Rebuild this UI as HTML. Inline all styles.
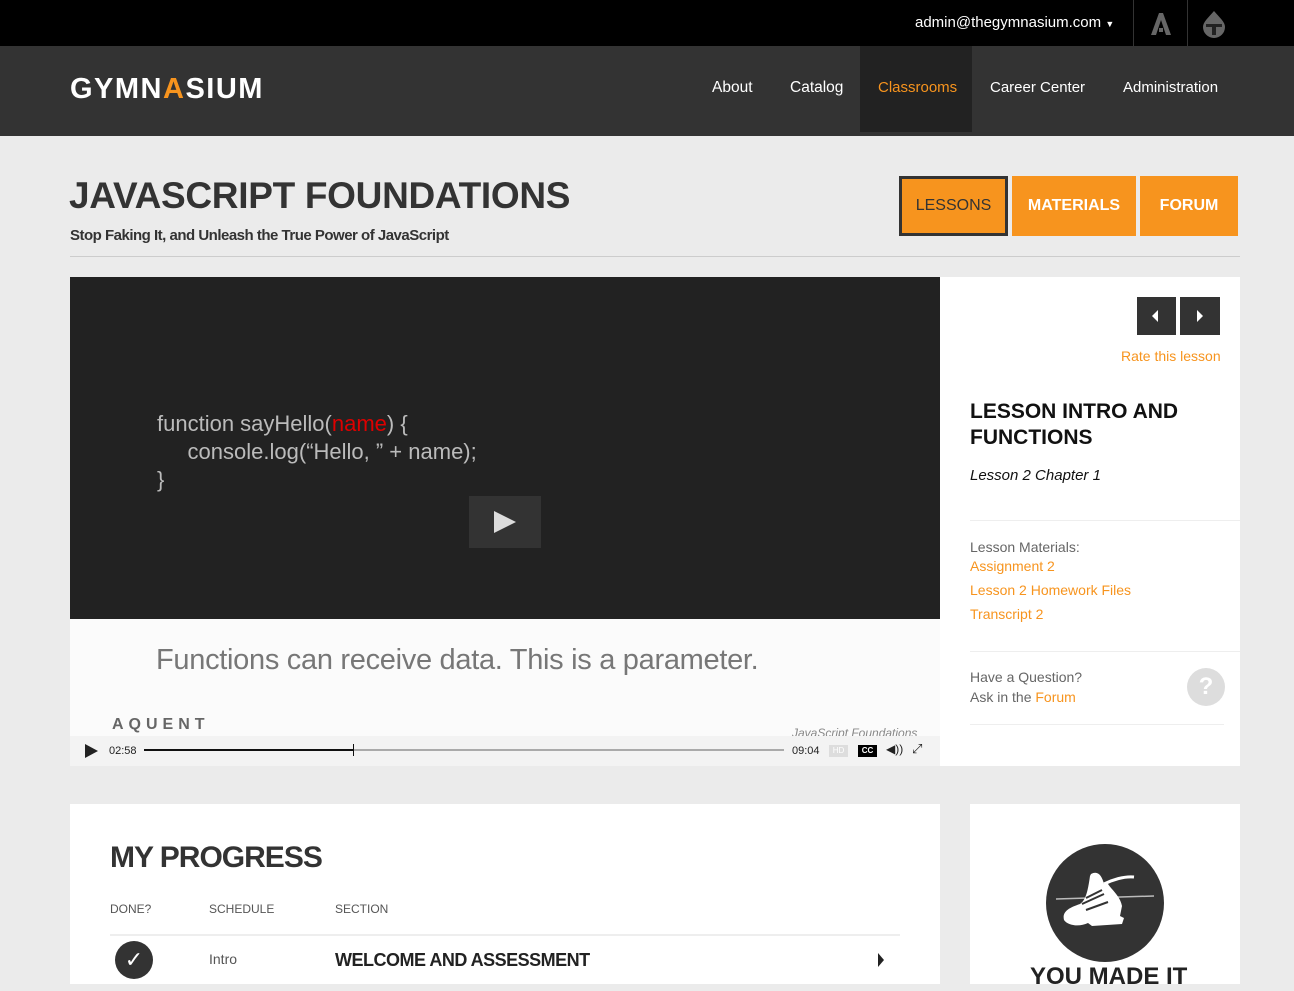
<!DOCTYPE html>
<html><head><meta charset="utf-8"><style>
*{margin:0;padding:0;box-sizing:border-box}
body{width:1294px;height:977px;overflow:hidden;background:#ebebeb;font-family:"Liberation Sans",sans-serif;position:relative}
.a{position:absolute}
.top{left:0;top:0;width:1294px;height:46px;background:#000}
.nav{left:0;top:46px;width:1294px;height:90px;background:#333}
.nl{color:#fff;font-size:15.5px;top:79px}
</style></head><body>
<div class="a top"></div>
<div class="a" style="left:915px;top:14px;color:#fff;font-size:15px">admin@thegymnasium.com <span style="font-size:9px">▼</span></div>
<div class="a" style="left:1133px;top:0;width:1px;height:46px;background:#333"></div>
<div class="a" style="left:1187px;top:0;width:1px;height:46px;background:#333"></div>
<svg class="a" style="left:1149px;top:12px" width="24" height="24"><path d="M2 23 L10 1 L14 1 L22 23 L17 23 L12 8 L7 23Z M10 16h4v4h-4z" fill="#666"/></svg>
<svg class="a" style="left:1202px;top:10px" width="24" height="28"><path d="M12 1 C18 8 23 12 23 17 A11 11 0 0 1 1 17 C1 12 6 8 12 1Z" fill="#666"/><rect x="4" y="14" width="16" height="3" fill="#222"/><rect x="10" y="17" width="4" height="8" fill="#222"/></svg>
<div class="a nav"></div>
<div class="a" style="left:70px;top:73px;color:#fff;font-size:29px;letter-spacing:1.5px;font-weight:bold">GYMN<span style="color:#f7941e">A</span>SIUM</div>
<div class="a" style="left:860px;top:46px;width:112px;height:86px;background:#222"></div>
<div class="a nl" style="left:712px">About</div>
<div class="a nl" style="left:790px">Catalog</div>
<div class="a nl" style="left:878px;color:#f7941e;font-size:15px">Classrooms</div>
<div class="a nl" style="left:990px;font-size:15px">Career Center</div>
<div class="a nl" style="left:1123px;font-size:15px">Administration</div>

<div class="a" style="left:69px;top:175px;font-size:37px;font-weight:bold;color:#333;letter-spacing:-0.3px">JAVASCRIPT FOUNDATIONS</div>
<div class="a" style="left:70px;top:227px;font-size:15px;font-weight:bold;color:#333;letter-spacing:-0.5px">Stop Faking It, and Unleash the True Power of JavaScript</div>
<div class="a" style="left:70px;top:256px;width:1170px;height:1px;background:#ccc"></div>
<div class="a" style="left:899px;top:176px;width:109px;height:60px;background:#f7941e;border:3px solid #333;color:#333;font-size:16px;text-align:center;line-height:54px">LESSONS</div>
<div class="a" style="left:1012px;top:176px;width:124px;height:60px;background:#f7941e;color:#fff;font-weight:bold;font-size:16px;text-align:center;line-height:60px">MATERIALS</div>
<div class="a" style="left:1140px;top:176px;width:98px;height:60px;background:#f7941e;color:#fff;font-weight:bold;font-size:16px;text-align:center;line-height:60px">FORUM</div>

<div class="a" style="left:70px;top:277px;width:870px;height:342px;background:#222"></div>
<div class="a" style="left:157px;top:410px;color:#bbb;font-size:22px;line-height:28px">function sayHello(<span style="color:#d00">name</span>) {<br>&nbsp;&nbsp;&nbsp;&nbsp;&nbsp;console.log(“Hello, ” + name);<br>}</div>
<div class="a" style="left:469px;top:496px;width:72px;height:52px;background:#333"></div>
<svg class="a" style="left:492px;top:510px" width="26" height="24"><path d="M2 1 L24 12 L2 23Z" fill="#ddd"/></svg>
<div class="a" style="left:70px;top:619px;width:870px;height:147px;background:#fbfbfb"></div>
<div class="a" style="left:156px;top:644px;color:#777;font-size:29px;letter-spacing:-0.3px">Functions can receive data. This is a parameter.</div>
<div class="a" style="left:112px;top:716px;color:#666;font-size:16px;letter-spacing:5px;font-weight:bold">AQUENT</div>
<div class="a" style="left:792px;top:726px;color:#888;font-size:12px;font-style:italic">JavaScript Foundations</div>
<div class="a" style="left:70px;top:736px;width:870px;height:30px;background:#f3f3f3"></div>
<svg class="a" style="left:84px;top:743px" width="16" height="16"><path d="M1 1 L14 8 L1 15Z" fill="#222"/></svg>
<div class="a" style="left:109px;top:745px;font-size:11px;color:#222">02:58</div>
<div class="a" style="left:144px;top:749px;width:640px;height:2px;background:#aaa"></div>
<div class="a" style="left:144px;top:749px;width:210px;height:2px;background:#111"></div>
<div class="a" style="left:353px;top:744px;width:1px;height:12px;background:#111"></div>
<div class="a" style="left:792px;top:745px;font-size:11px;color:#222">09:04</div>
<div class="a" style="left:829px;top:745px;width:19px;height:12px;background:#ddd;color:#fff;font-size:8px;text-align:center;line-height:12px">HD</div>
<div class="a" style="left:858px;top:745px;width:19px;height:12px;background:#000;color:#fff;font-size:8px;text-align:center;line-height:12px;font-weight:bold">CC</div>
<div class="a" style="left:886px;top:742px;font-size:12px;color:#222">◀))</div>
<div class="a" style="left:912px;top:741px;font-size:13px;color:#222">⤢</div>

<div class="a" style="left:940px;top:277px;width:300px;height:489px;background:#fff"></div>
<div class="a" style="left:1137px;top:297px;width:39px;height:38px;background:#333"></div>
<div class="a" style="left:1180px;top:297px;width:40px;height:38px;background:#333"></div>
<svg class="a" style="left:1152px;top:310px" width="8" height="12"><path d="M6 0 L0 6 L6 12Z" fill="#fff"/></svg>
<svg class="a" style="left:1196px;top:310px" width="8" height="12"><path d="M1 0 L7 6 L1 12Z" fill="#fff"/></svg>
<div class="a" style="left:1121px;top:348px;color:#f7941e;font-size:14px">Rate this lesson</div>
<div class="a" style="left:970px;top:399px;font-size:21px;font-weight:bold;color:#111;line-height:26px">LESSON INTRO AND<br>FUNCTIONS</div>
<div class="a" style="left:970px;top:467px;font-size:15px;font-style:italic;color:#111">Lesson 2 Chapter 1</div>
<div class="a" style="left:970px;top:520px;width:270px;height:1px;background:#eee"></div>
<div class="a" style="left:970px;top:537px;font-size:14px;color:#666;line-height:20px">Lesson Materials:</div>
<div class="a" style="left:970px;top:554px;font-size:14px;color:#f7941e;line-height:24px">Assignment 2<br>Lesson 2 Homework Files<br>Transcript 2</div>
<div class="a" style="left:970px;top:651px;width:270px;height:1px;background:#eee"></div>
<div class="a" style="left:970px;top:667px;font-size:14px;color:#666;line-height:20px">Have a Question?<br>Ask in the <span style="color:#f7941e">Forum</span></div>
<div class="a" style="left:1187px;top:668px;width:38px;height:38px;border-radius:50%;background:#ddd;color:#fff;font-size:24px;font-weight:bold;text-align:center;line-height:38px">?</div>
<div class="a" style="left:970px;top:724px;width:254px;height:1px;background:#eee"></div>

<div class="a" style="left:70px;top:804px;width:870px;height:180px;background:#fff"></div>
<div class="a" style="left:110px;top:841px;font-size:30px;font-weight:bold;color:#333;letter-spacing:-1px">MY PROGRESS</div>
<div class="a" style="left:110px;top:902px;font-size:12px;color:#555">DONE?</div>
<div class="a" style="left:209px;top:902px;font-size:12px;color:#555">SCHEDULE</div>
<div class="a" style="left:335px;top:902px;font-size:12px;color:#555">SECTION</div>
<div class="a" style="left:110px;top:934px;width:790px;height:2px;background:#eee"></div>
<div class="a" style="left:115px;top:941px;width:38px;height:38px;border-radius:50%;background:#333;color:#fff;font-size:22px;text-align:center;line-height:38px">✓</div>
<div class="a" style="left:209px;top:951px;font-size:14px;color:#555">Intro</div>
<div class="a" style="left:335px;top:950px;font-size:18px;font-weight:bold;color:#222;letter-spacing:-0.5px">WELCOME AND ASSESSMENT</div>
<svg class="a" style="left:877px;top:953px" width="8" height="14"><path d="M1 0 L7 7 L1 14Z" fill="#222"/></svg>

<div class="a" style="left:970px;top:804px;width:270px;height:180px;background:#fff"></div>
<div class="a" style="left:1046px;top:844px;width:118px;height:118px;border-radius:50%;background:#333"></div>
<svg class="a" style="left:1046px;top:844px" width="118" height="118"><path d="M10 55 L108 52" stroke="#bbb" stroke-width="1.5"/><path d="M45 30 C52 26 56 32 58 40 L62 40 C66 46 74 52 76 62 L74 72 L78 74 L76 80 L46 82 L42 79 C34 83 22 82 18 76 C16 68 22 64 34 60 C40 56 42 46 44 32Z" fill="#fff"/><path d="M58 40 C66 36 78 32 88 33" stroke="#fff" stroke-width="3" fill="none"/><path d="M40 66 L62 58 M36 60 L58 50 M40 54 L56 46" stroke="#333" stroke-width="2"/></svg>
<div class="a" style="left:1030px;top:963px;font-size:24px;font-weight:bold;color:#222">YOU MADE IT</div>
</body></html>
